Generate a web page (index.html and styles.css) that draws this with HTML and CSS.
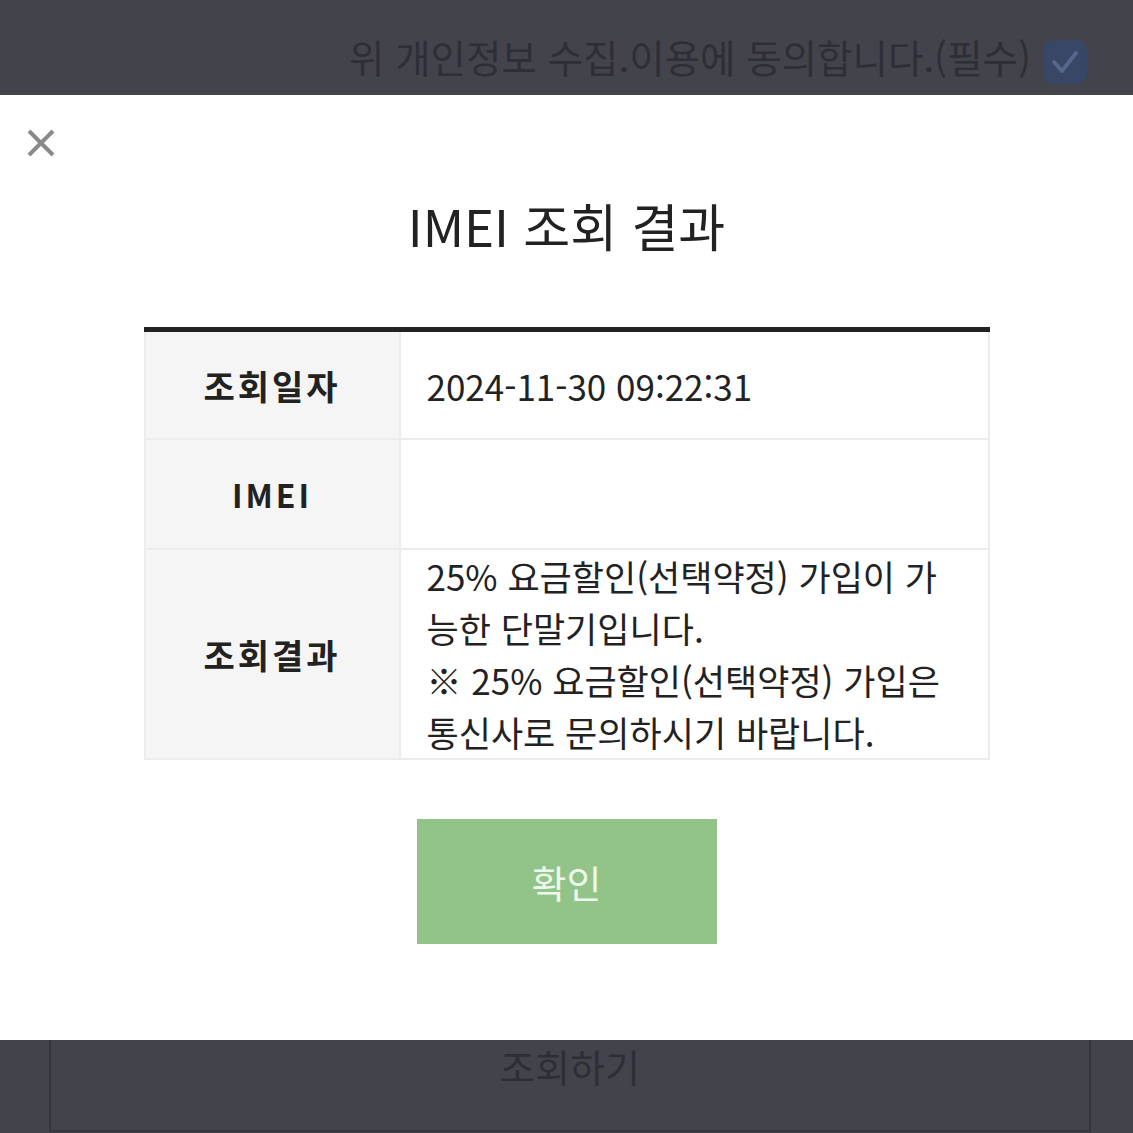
FILE: index.html
```html
<!DOCTYPE html>
<html lang="ko">
<head>
  <meta charset="UTF-8">
  <title>IMEI 조회 결과</title>
  <link rel="stylesheet" href="styles.css">
</head>
<body>
  <div class="topBar">
    <span class="agreeText">위 개인정보 수집.이용에 동의합니다.(필수)</span>
    <span class="checkBox">
      <svg width="44" height="44" viewBox="0 0 44 44">
        <path d="M11 22 L19 31 L33 13" fill="none" stroke="#55678c" stroke-width="4" stroke-linecap="round" stroke-linejoin="round"/>
      </svg>
    </span>
  </div>

  <div class="modal">
    <div class="closeBtn">
      <svg width="30" height="30" viewBox="0 0 30 30">
        <path d="M3 3 L27 27 M27 3 L3 27" stroke="#8a8a8a" stroke-width="4"/>
      </svg>
    </div>

    <h1 class="title">IMEI 조회 결과</h1>

    <div class="resultTable">
      <div class="label">조회일자</div>
      <div class="value">2024-11-30 09:22:31</div>

      <div class="label latin">IMEI</div>
      <div class="value"></div>

      <div class="label">조회결과</div>
      <div class="value multi">25% 요금할인(선택약정) 가입이 가능한 단말기입니다.<br>※ 25% 요금할인(선택약정) 가입은 통신사로 문의하시기 바랍니다.</div>
    </div>

    <button class="okBtn">확인</button>
  </div>

  <div class="bottomBar">
    <div class="searchBtn">조회하기</div>
  </div>
</body>
</html>
```

FILE: styles.css
```css
body {
  margin: 0;
  background: #43434b;
  font-family: "Noto Sans CJK KR", "Noto Sans", sans-serif;
  overflow: hidden;
}

.topBar {
  height: 95px;
  display: flex;
  align-items: flex-end;
  justify-content: flex-end;
  padding: 0 46px 11px 0;
  box-sizing: border-box;
}

.agreeText {
  font-size: 38.5px;
  line-height: 44px;
  color: #2e2f36;
  margin: 0 12px 6px 0;
}

.checkBox {
  width: 44px;
  height: 44px;
  border-radius: 10px;
  background: #384766;
}

.modal {
  height: 945px;
  background: white;
  padding-top: 33px;
  box-sizing: border-box;
  display: flex;
  flex-direction: column;
  align-items: center;
}

.closeBtn {
  align-self: flex-start;
  margin-left: 26px;
  width: 30px;
  height: 30px;
}

.title {
  margin: 35px 0 0;
  font-size: 51px;
  font-weight: 400;
  line-height: 64px;
  color: #222;
}

.resultTable {
  margin-top: 70px;
  width: 846px;
  display: grid;
  grid-template-columns: 253px 1fr;
  grid-template-rows: 106px 108px 208px;
  gap: 2px;
  padding: 0 2px 2px;
  box-sizing: border-box;
  background: #ececec;
  border-top: 5px solid #222;
}

.label {
  background: #f5f5f5;
  display: flex;
  align-items: center;
  justify-content: center;
  font-size: 34px;
  font-weight: 700;
  letter-spacing: 3px;
  color: #222;
}

.label.latin {
  font-size: 32px;
  letter-spacing: 3px;
}

.value {
  background: white;
  display: flex;
  align-items: center;
  padding: 0 36px 0 26px;
  font-size: 35px;
  color: #222;
}

.value.multi {
  display: block;
  line-height: 52px;
}

.okBtn {
  margin-top: 59px;
  width: 300px;
  height: 125px;
  border: none;
  background: #92c48a;
  color: #eef8ea;
  font-family: inherit;
  font-size: 38px;
}

.bottomBar {
  height: 93px;
  padding: 0 42px 2px 49px;
  box-sizing: border-box;
}

.searchBtn {
  height: 90px;
  border: 2px solid #34343b;
  border-top: none;
  text-align: center;
  font-size: 38px;
  line-height: 52px;
  color: #2e2f36;
}
```
